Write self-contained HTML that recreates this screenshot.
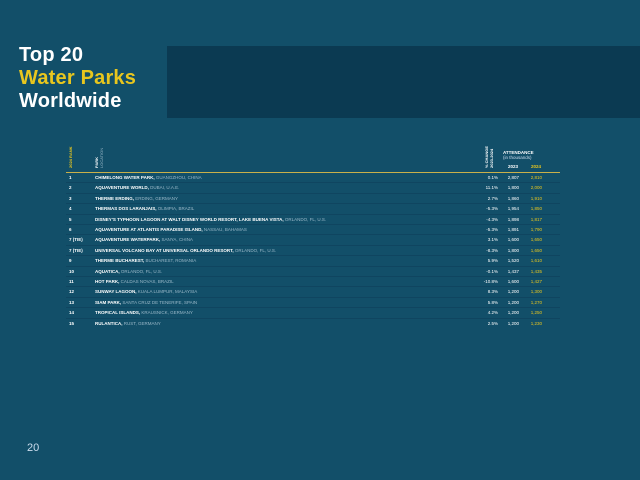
<!DOCTYPE html>
<html><head><meta charset="utf-8"><style>
*{margin:0;padding:0;box-sizing:border-box}
body{width:640px;height:480px;background:#124f69;font-family:"Liberation Sans",sans-serif;position:relative;overflow:hidden;color:#fff}
.t{position:absolute;left:19px;top:44px;font-size:20px;font-weight:bold;line-height:23px;letter-spacing:0.2px}
.t .y{color:#e8c61e}
.box{position:absolute;left:167px;top:46px;width:473px;height:72px;background:#0b3a52}
.vl{position:absolute;font-size:4px;font-weight:bold;transform:rotate(-90deg);transform-origin:left top;white-space:nowrap;line-height:5px}
.gold{position:absolute;left:66px;top:172px;width:494px;height:1px;background:#c9b04a}
.row{position:absolute;left:66px;width:494px;height:10.4px;border-bottom:1px solid #0f4560;font-size:4.5px;font-weight:bold;line-height:10.5px}
.row span{position:absolute}
.r{left:3px}.p{left:29px}.p i{font-style:normal;color:#9ab8c8;font-weight:normal}
.c{right:62px;font-weight:normal}.a{right:41px;font-weight:normal}.b{right:18px;color:#e8c61e;font-weight:normal}
.hd{position:absolute;font-size:4.5px;font-weight:bold}
.pg{position:absolute;left:27px;top:442px;font-size:11px;color:#cde}
</style></head><body>
<div class="t">Top 20<br><span class="y">Water Parks</span><br>Worldwide</div>
<div class="box"></div>
<div class="vl" style="left:68px;top:168px;color:#e8c61e">2024 RANK</div>
<div class="vl" style="left:94px;top:168px">PARK</div>
<div class="vl" style="left:99px;top:168px;color:#9ab8c8;font-weight:normal">LOCATION</div>
<div class="vl" style="left:484px;top:168px">% CHANGE</div>
<div class="vl" style="left:489px;top:168px">2023-2024</div>
<div class="hd" style="left:503px;top:150px">ATTENDANCE</div>
<div class="hd" style="left:503px;top:155px;font-weight:normal;color:#cde">(in thousands)</div>
<div class="hd" style="left:508px;top:164px">2023</div>
<div class="hd" style="left:531px;top:164px;color:#e8c61e">2024</div>
<div class="gold"></div>
<div class="row" style="top:173px"><span class="r">1</span><span class="p">CHIMELONG WATER PARK, <i>GUANGZHOU, CHINA</i></span><span class="c">0.1%</span><span class="a">2,807</span><span class="b">2,810</span></div>
<div class="row" style="top:183.4px"><span class="r">2</span><span class="p">AQUAVENTURE WORLD, <i>DUBAI, U.A.E.</i></span><span class="c">11.1%</span><span class="a">1,800</span><span class="b">2,000</span></div>
<div class="row" style="top:193.8px"><span class="r">3</span><span class="p">THERME ERDING, <i>ERDING, GERMANY</i></span><span class="c">2.7%</span><span class="a">1,860</span><span class="b">1,910</span></div>
<div class="row" style="top:204.2px"><span class="r">4</span><span class="p">THERMAS DOS LARANJAIS, <i>OLIMPIA, BRAZIL</i></span><span class="c">-5.3%</span><span class="a">1,954</span><span class="b">1,850</span></div>
<div class="row" style="top:214.6px"><span class="r">5</span><span class="p">DISNEY'S TYPHOON LAGOON AT WALT DISNEY WORLD RESORT, LAKE BUENA VISTA, <i>ORLANDO, FL, U.S.</i></span><span class="c">-4.3%</span><span class="a">1,898</span><span class="b">1,817</span></div>
<div class="row" style="top:225px"><span class="r">6</span><span class="p">AQUAVENTURE AT ATLANTIS PARADISE ISLAND, <i>NASSAU, BAHAMAS</i></span><span class="c">-5.3%</span><span class="a">1,891</span><span class="b">1,790</span></div>
<div class="row" style="top:235.4px"><span class="r">7 (TIE)</span><span class="p">AQUAVENTURE WATERPARK, <i>SANYA, CHINA</i></span><span class="c">3.1%</span><span class="a">1,600</span><span class="b">1,650</span></div>
<div class="row" style="top:245.8px"><span class="r">7 (TIE)</span><span class="p">UNIVERSAL VOLCANO BAY AT UNIVERSAL ORLANDO RESORT, <i>ORLANDO, FL, U.S.</i></span><span class="c">-8.3%</span><span class="a">1,800</span><span class="b">1,650</span></div>
<div class="row" style="top:256.2px"><span class="r">9</span><span class="p">THERME BUCHAREST, <i>BUCHAREST, ROMANIA</i></span><span class="c">5.9%</span><span class="a">1,520</span><span class="b">1,610</span></div>
<div class="row" style="top:266.6px"><span class="r">10</span><span class="p">AQUATICA, <i>ORLANDO, FL, U.S.</i></span><span class="c">-0.1%</span><span class="a">1,437</span><span class="b">1,435</span></div>
<div class="row" style="top:277px"><span class="r">11</span><span class="p">HOT PARK, <i>CALDAS NOVAS, BRAZIL</i></span><span class="c">-10.8%</span><span class="a">1,600</span><span class="b">1,427</span></div>
<div class="row" style="top:287.4px"><span class="r">12</span><span class="p">SUNWAY LAGOON, <i>KUALA LUMPUR, MALAYSIA</i></span><span class="c">8.3%</span><span class="a">1,200</span><span class="b">1,300</span></div>
<div class="row" style="top:297.8px"><span class="r">13</span><span class="p">SIAM PARK, <i>SANTA CRUZ DE TENERIFE, SPAIN</i></span><span class="c">5.8%</span><span class="a">1,200</span><span class="b">1,270</span></div>
<div class="row" style="top:308.2px"><span class="r">14</span><span class="p">TROPICAL ISLANDS, <i>KRAUSNICK, GERMANY</i></span><span class="c">4.2%</span><span class="a">1,200</span><span class="b">1,250</span></div>
<div class="row" style="top:318.6px;border-bottom:none"><span class="r">15</span><span class="p">RULANTICA, <i>RUST, GERMANY</i></span><span class="c">2.5%</span><span class="a">1,200</span><span class="b">1,230</span></div>
<div class="pg">20</div>
</body></html>
